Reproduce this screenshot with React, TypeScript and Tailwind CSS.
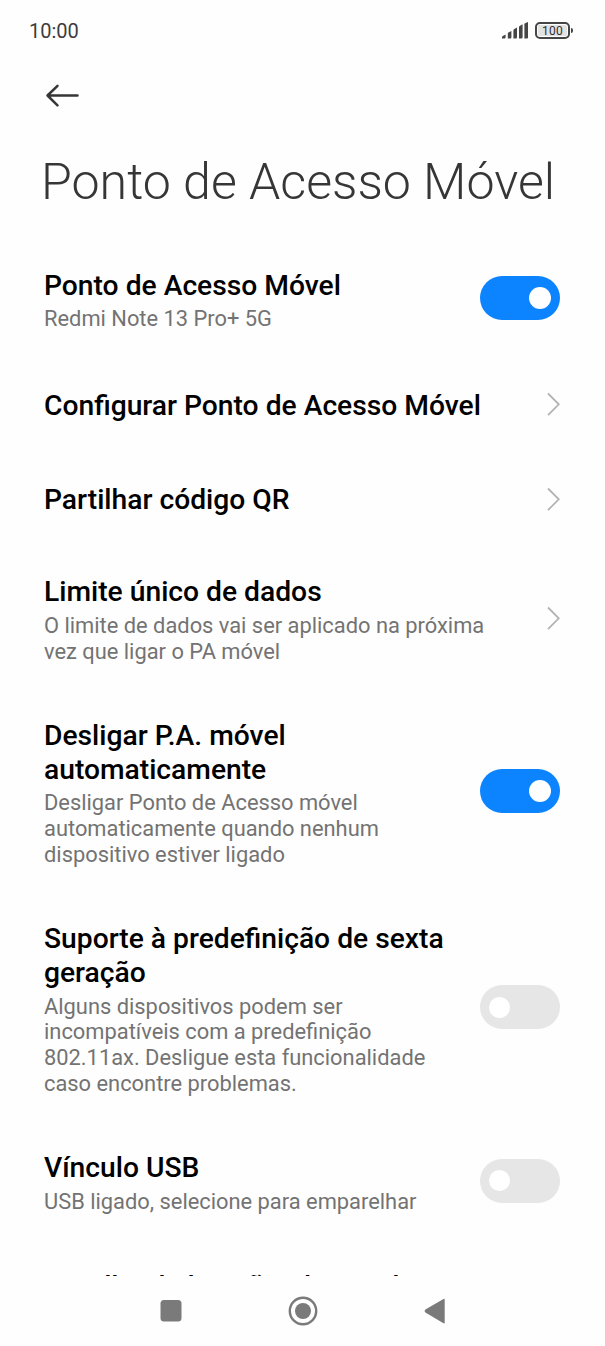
import React from 'react';
import clsx from 'clsx';

type Item = {
  title: string;
  description?: string;
  control: 'switch' | 'link';
  on?: boolean;
  width: string;
};

const items: Item[] = [
  { title: 'Ponto de Acesso Móvel', description: 'Redmi Note 13 Pro+ 5G', control: 'switch', on: true, width: 'w-[410px]' },
  { title: 'Configurar Ponto de Acesso Móvel', control: 'link', width: 'w-[460px]' },
  { title: 'Partilhar código QR', control: 'link', width: 'w-[460px]' },
  {
    title: 'Limite único de dados',
    description: 'O limite de dados vai ser aplicado na próxima vez que ligar o PA móvel',
    control: 'link',
    width: 'w-[460px]'
  },
  {
    title: 'Desligar P.A. móvel automaticamente',
    description: 'Desligar Ponto de Acesso móvel automaticamente quando nenhum dispositivo estiver ligado',
    control: 'switch',
    on: true,
    width: 'w-[410px]'
  },
  {
    title: 'Suporte à predefinição de sexta geração',
    description: 'Alguns dispositivos podem ser incompatíveis com a predefinição 802.11ax. Desligue esta funcionalidade caso encontre problemas.',
    control: 'switch',
    width: 'w-[410px]'
  },
  { title: 'Vínculo USB', description: 'USB ligado, selecione para emparelhar', control: 'switch', width: 'w-[410px]' }
];

const StatusBar = () => (
  <div className="h-[60px] shrink-0 flex items-center justify-between pl-[29px] pr-8">
    <span className="pt-px text-[20px] font-[450] text-[#3c3c3c]">10:00</span>
    <div className="flex items-center gap-[7px]">
      <svg width="26" height="17" viewBox="0 0 26 17" fill="#454545">
        <path d="M0 16.5v-1.3q0-.8.8-1.2l2.8-1.5v2.8q0 1.2-1.2 1.2z" />
        <path d="M5.8 16.5v-4.9q0-.7.6-1l3-1.6v6.3q0 1.2-1.2 1.2z" />
        <path d="M11.4 16.5V8.2q0-.7.6-1l3-1.6v9.7q0 1.2-1.2 1.2z" />
        <path d="M17 16.5V4.9q0-.7.6-1l3-1.6v13q0 1.2-1.2 1.2z" />
        <path d="M22.4 16.5V2.2q0-.7.6-1L26 0v15.3q0 1.2-1.2 1.2z" />
      </svg>
      <div className="flex items-center gap-px">
        <div className="w-[35px] h-[17px] rounded-[5px] border-2 border-[#454545] p-px">
          <div className="h-full rounded-[2px] bg-[#e2e2e2] flex items-center justify-center pt-px text-[12px] leading-none tracking-[0.2px] text-[#303030]">
            100
          </div>
        </div>
        <div className="w-[2px] h-[5px] rounded-r-sm bg-[#454545]" />
      </div>
    </div>
  </div>
);

const Switch = ({ on }: { on?: boolean }) => (
  <div className={clsx('w-20 h-11 shrink-0 rounded-full flex items-center px-[9px]', on ? 'bg-[#0d84ff] justify-end' : 'bg-[#e6e6e6] justify-start')}>
    <div className={clsx('rounded-full bg-white', on ? 'size-[22px]' : 'size-[21px]')} />
  </div>
);

const Chevron = () => (
  <svg width="13" height="24" viewBox="0 0 13 24" fill="none" stroke="#b3b3b3" strokeWidth="1.8" className="shrink-0">
    <path d="M1 1.5L11.8 12.3 1 23.1" />
  </svg>
);

const Title = ({ children }: { children: React.ReactNode }) => (
  <div className="pt-px text-[28.22px] leading-[33.4px] font-medium text-black">{children}</div>
);

const Row = ({ item }: { item: Item }) => (
  <div className={clsx('shrink-0 flex items-center justify-between pl-11 pr-[45px]', !item.description && 'h-[94.4px]')}>
    <div className={clsx(item.width, item.description ? 'pt-[28.5px] pb-[25px]' : 'pt-[2px]')}>
      <Title>{item.title}</Title>
      {item.description && (
        <div className="mt-[4.4px] text-[21.87px] leading-[25.8px] text-[#737373]">{item.description}</div>
      )}
    </div>
    {item.control === 'switch' ? <Switch on={item.on} /> : <Chevron />}
  </div>
);

const NavBar = () => (
  <div className="flex-1 flex justify-center gap-[105px] pt-5">
    <svg width="30" height="30" viewBox="0 0 30 30" fill="#7a7a7a">
      <rect x="7.5" y="4" width="21" height="21.5" rx="3.5" />
    </svg>
    <svg width="30" height="30" viewBox="0 0 30 30">
      <circle cx="15" cy="15" r="13.2" fill="none" stroke="#7a7a7a" strokeWidth="2.4" />
      <circle cx="15" cy="15" r="8" fill="#7a7a7a" />
    </svg>
    <svg width="30" height="30" viewBox="0 0 30 30" fill="#7a7a7a">
      <path d="M2.4 13.6L20.5 3q1.2-.5 1.2.9v22.5q0 1.4-1.2.8L2.4 16.4q-1.8-1.4 0-2.8z" />
    </svg>
  </div>
);

export default function App() {
  return (
    <div className="w-[605px] h-[1346px] overflow-hidden flex flex-col bg-[#fefefe] font-['Roboto',sans-serif]">
      <StatusBar />
      <div className="h-[1216px] shrink-0 overflow-hidden flex flex-col">
        <div className="h-[72px] shrink-0 pl-[45px] pt-6">
          <svg width="35" height="24" viewBox="0 0 35 24" fill="none" stroke="#363636" strokeWidth="2.5" strokeLinecap="round" strokeLinejoin="round">
            <path d="M32.5 11.5H2.5M12.5 1.8L2.5 11.5l10 9.8" />
          </svg>
        </div>
        <h1 className="h-[107px] shrink-0 pl-[41px] pt-5 text-[50.1px] leading-[60px] font-light whitespace-nowrap text-[#363636]">
          Ponto de Acesso Móvel
        </h1>
        {items.map((item) => (
          <Row key={item.title} item={item} />
        ))}
        {/* Next entry, scrolled mostly under the navigation bar */}
        <div className="shrink-0 pl-11 pt-[29px]">
          <Title>Partilha da ligação Bluetooth</Title>
        </div>
      </div>
      <NavBar />
    </div>
  );
}
